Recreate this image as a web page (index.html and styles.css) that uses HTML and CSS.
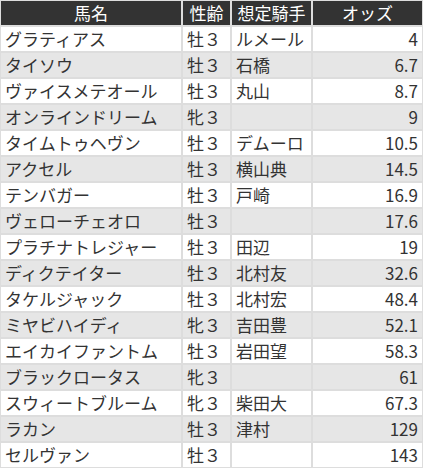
FILE: index.html
```html
<!DOCTYPE html>
<html lang="ja">
<head>
<meta charset="utf-8">
<link rel="stylesheet" href="styles.css">
</head>
<body>
<table class="odds">
<colgroup><col class="c1"><col class="c2"><col class="c3"><col class="c4"></colgroup>
<thead>
<tr><th>馬名</th><th>性齢</th><th>想定騎手</th><th>オッズ</th></tr>
</thead>
<tbody>
<tr><td>グラティアス</td><td>牡３</td><td>ルメール</td><td class="num">4</td></tr>
<tr><td>タイソウ</td><td>牡３</td><td>石橋</td><td class="num">6.7</td></tr>
<tr><td>ヴァイスメテオール</td><td>牡３</td><td>丸山</td><td class="num">8.7</td></tr>
<tr><td>オンラインドリーム</td><td>牝３</td><td></td><td class="num">9</td></tr>
<tr><td>タイムトゥヘヴン</td><td>牡３</td><td>デムーロ</td><td class="num">10.5</td></tr>
<tr><td>アクセル</td><td>牡３</td><td>横山典</td><td class="num">14.5</td></tr>
<tr><td>テンバガー</td><td>牡３</td><td>戸崎</td><td class="num">16.9</td></tr>
<tr><td>ヴェローチェオロ</td><td>牡３</td><td></td><td class="num">17.6</td></tr>
<tr><td>プラチナトレジャー</td><td>牡３</td><td>田辺</td><td class="num">19</td></tr>
<tr><td>ディクテイター</td><td>牡３</td><td>北村友</td><td class="num">32.6</td></tr>
<tr><td>タケルジャック</td><td>牡３</td><td>北村宏</td><td class="num">48.4</td></tr>
<tr><td>ミヤビハイディ</td><td>牝３</td><td>吉田豊</td><td class="num">52.1</td></tr>
<tr><td>エイカイファントム</td><td>牡３</td><td>岩田望</td><td class="num">58.3</td></tr>
<tr><td>ブラックロータス</td><td>牝３</td><td></td><td class="num">61</td></tr>
<tr><td>スウィートブルーム</td><td>牝３</td><td>柴田大</td><td class="num">67.3</td></tr>
<tr><td>ラカン</td><td>牡３</td><td>津村</td><td class="num">129</td></tr>
<tr><td>セルヴァン</td><td>牡３</td><td></td><td class="num">143</td></tr>
</tbody>
</table>
</body>
</html>
```
FILE: styles.css
```css
html, body {
  margin: 0;
  padding: 0;
  background: #ffffff;
}
.odds {
  width: 423px;
  table-layout: fixed;
  border-collapse: separate;
  border-spacing: 0;
  font-family: "Noto Sans CJK JP", "Noto Sans", sans-serif;
  font-size: 17px;
  color: #333333;
}
.c1 { width: 182px; }
.c2 { width: 49px; }
.c3 { width: 81px; }
.c4 { width: 111px; }
.odds th, .odds td {
  border: 1px solid #dddddd;
  height: 24px;
  padding: 0 4px;
  line-height: 24px;
  white-space: nowrap;
  overflow: hidden;
  text-align: left;
  font-weight: normal;
}
.odds th {
  background: #333333;
  color: #ffffff;
  text-align: center;
}
.odds tbody tr:nth-child(even) td {
  background: #e6e6e6;
}
.odds td.num {
  text-align: right;
}
```
